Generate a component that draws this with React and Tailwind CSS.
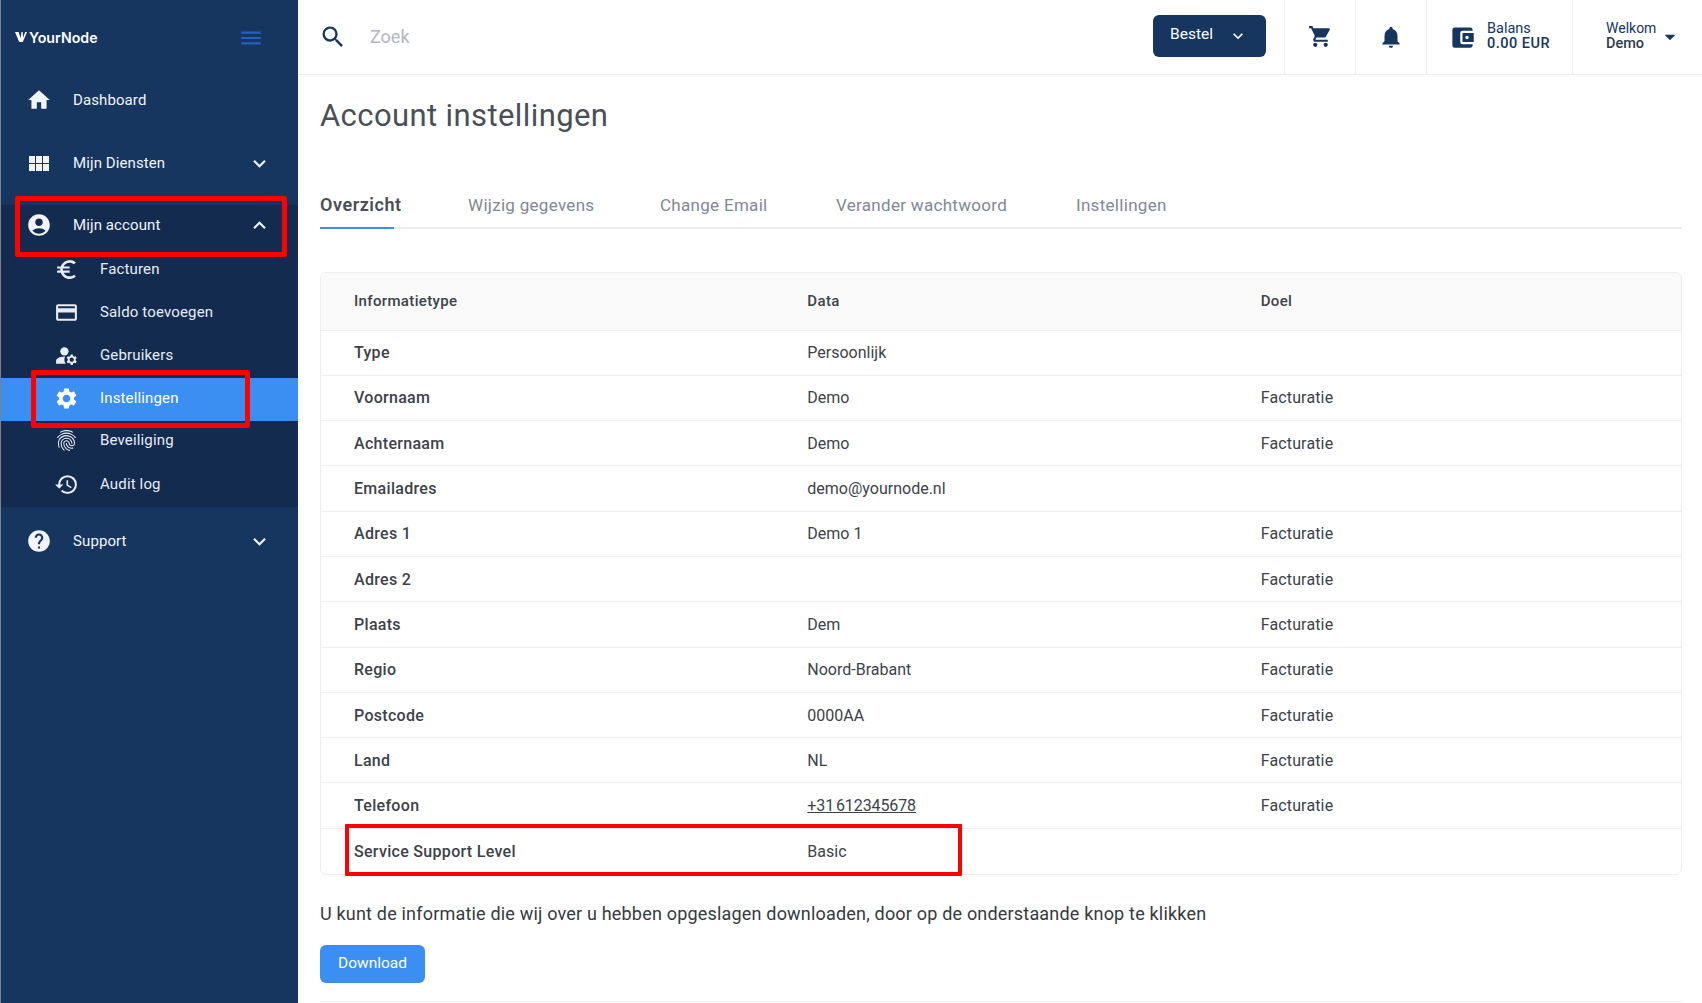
import React from "react";
import {
  MdHome, MdAccountCircle, MdEuroSymbol, MdCreditCard, MdManageAccounts, MdSettings,
  MdFingerprint, MdHistory, MdHelp, MdKeyboardArrowDown, MdKeyboardArrowUp, MdSearch, MdShoppingCart,
  MdNotifications, MdAccountBalanceWallet, MdArrowDropDown, MdMenu,
} from "react-icons/md";

const font = { fontFamily: "Roboto, 'Liberation Sans', sans-serif" };

function GridIcon({ className }) {
  return (
    <svg viewBox="0 0 26 26" className={className} fill="currentColor">
      <rect x="3" y="5" width="6" height="7" />
      <rect x="10" y="5" width="6" height="7" />
      <rect x="17" y="5" width="6" height="7" />
      <rect x="3" y="13" width="6" height="7" />
      <rect x="10" y="13" width="6" height="7" />
      <rect x="17" y="13" width="6" height="7" />
    </svg>
  );
}

function TopRow({ icon: Icon, label, chevron, className = "" }) {
  return (
    <div className={`flex items-center pl-[25px] pr-[26px] text-[#f1f4f8] ${className}`}>
      <Icon className="w-[26px] h-[26px] shrink-0" />
      <span className="ml-[21px] text-[15px] tracking-[0.1px] flex-1">{label}</span>
      {chevron === "down" && <MdKeyboardArrowDown className="w-[25px] h-[25px]" />}
      {chevron === "up" && <MdKeyboardArrowUp className="w-[25px] h-[25px]" />}
    </div>
  );
}

function SubRow({ icon: Icon, label, active, className = "" }) {
  return (
    <div className={`h-[43px] flex items-center pl-[53px] text-[15px] tracking-[0.15px] ${active ? "bg-[#3b8ff3] text-white" : "text-[#e8edf3]"} ${className}`}>
      <Icon className="w-[25px] h-[25px] shrink-0" />
      <span className="ml-[21px]">{label}</span>
    </div>
  );
}

const rows = [
  ["Type", "Persoonlijk", ""],
  ["Voornaam", "Demo", "Facturatie"],
  ["Achternaam", "Demo", "Facturatie"],
  ["Emailadres", "demo@yournode.nl", ""],
  ["Adres 1", "Demo 1", "Facturatie"],
  ["Adres 2", "", "Facturatie"],
  ["Plaats", "Dem", "Facturatie"],
  ["Regio", "Noord-Brabant", "Facturatie"],
  ["Postcode", "0000AA", "Facturatie"],
  ["Land", "NL", "Facturatie"],
  ["Telefoon", "+31 612345678", "Facturatie"],
  ["Service Support Level", "Basic", ""],
];

export default function App() {
  return (
    <div className="relative flex w-[1702px] h-[1003px] overflow-hidden bg-white" style={font}>
      {/* Sidebar */}
      <aside className="w-[298px] shrink-0 h-full bg-[#16355f] border-l border-[#7d8289] flex flex-col">
        <div className="h-[69px] flex items-center justify-between pl-[14px] pr-[34px] pt-[6px]">
          <div className="flex items-center">
            <svg viewBox="0 0 12 10" className="w-[12px] h-[10px] mr-[2px]" fill="#fff">
              <path d="M0 0h3.6l2.2 6.2L6.4 0h1.2l.6 5.6L10.2 0H12L7.8 10H4.2z" />
            </svg>
            <span className="text-[14.2px] font-semibold text-white" style={{ fontFamily: "Inter, sans-serif" }}>YourNode</span>
          </div>
          <MdMenu className="w-[26px] h-[26px] text-[#2362bd]" />
        </div>
        <TopRow icon={MdHome} label="Dashboard" className="h-[62px]" />
        <TopRow icon={GridIcon} label="Mijn Diensten" chevron="down" className="h-[63px] pt-[2px]" />
        <div className="mt-[11px] bg-[#132b4f]">
          <TopRow icon={MdAccountCircle} label="Mijn account" chevron="up" className="h-[43px] pb-[3px]" />
          <SubRow icon={MdEuroSymbol} label="Facturen" />
          <SubRow icon={MdCreditCard} label="Saldo toevoegen" />
          <SubRow icon={MdManageAccounts} label="Gebruikers" className="mb-[1px]" />
          <SubRow icon={MdSettings} label="Instellingen" active className="pb-[3px]" />
          <SubRow icon={MdFingerprint} label="Beveiliging" className="pb-[4px]" />
          <SubRow icon={MdHistory} label="Audit log" className="h-[41px] pb-[3px]" />
        </div>
        <TopRow icon={MdHelp} label="Support" chevron="down" className="h-[68px]" />
      </aside>

      {/* Main */}
      <div className="flex-1 min-w-0 flex flex-col">
        <header className="h-[75px] shrink-0 border-b border-[#eceef1] flex items-stretch">
          <div className="flex items-center pl-[21px] flex-1">
            <MdSearch className="w-[28px] h-[28px] text-[#16355f]" />
            <span className="ml-[23px] mb-[2px] text-[18px] text-[#b3b5c4]">Zoek</span>
          </div>
          <div className="flex items-center pr-[18px]">
            <button className="w-[113px] h-[42px] mb-[2px] pb-[2px] bg-[#16355f] rounded-[6px] text-white text-[15.5px] flex items-center pl-[17px]">
              Bestel
              <MdKeyboardArrowDown className="w-[20px] h-[20px] ml-[15px] mt-[2px]" />
            </button>
          </div>
          <div className="w-[71px] border-l border-[#eceef1] flex items-center justify-center">
            <MdShoppingCart className="w-[25px] h-[25px] text-[#16355f] mb-[2px]" />
          </div>
          <div className="w-[71px] border-l border-[#eceef1] flex items-center justify-center">
            <MdNotifications className="w-[26px] h-[26px] text-[#16355f]" />
          </div>
          <div className="w-[146px] border-l border-[#eceef1] flex items-center pl-[22px]">
            <MdAccountBalanceWallet className="w-[27px] h-[27px] text-[#16355f]" />
            <div className="ml-[11px] mb-[2px] text-[14.5px] leading-[15px] text-[#16355f]">
              <div>Balans</div>
              <div className="font-medium tracking-[0.5px]">0.00 EUR</div>
            </div>
          </div>
          <div className="w-[130px] border-l border-[#eceef1] flex items-center pl-[33px]">
            <div className="text-[14px] leading-[15px] text-[#16355f] mb-[2px]">
              <div>Welkom</div>
              <div className="font-medium text-[#2f3a4a] text-[14.5px]">Demo</div>
            </div>
            <MdArrowDropDown className="w-[26px] h-[26px] ml-[1px] text-[#16355f]" />
          </div>
        </header>

        <main className="pl-[22px] pr-[20px] flex-1 min-h-0">
          <h1 className="mt-[21px] text-[31px] leading-[40px] text-[#4a4f57] tracking-[0.4px]">Account instellingen</h1>

          <nav className="mt-[57px] h-[36px] border-b-2 border-[#eceef1] flex text-[17px] text-[#7f8894] tracking-[0.3px]">
            <div className="relative w-[148px] text-[18px] font-semibold leading-[24px] text-[#4a4f57] tracking-[0.55px]">
              Overzicht
              <div className="absolute left-0 top-[34px] w-[74px] h-[2px] bg-[#3b8ff3]" />
            </div>
            <div className="w-[192px]">Wijzig gegevens</div>
            <div className="w-[176px]">Change Email</div>
            <div className="w-[240px]">Verander wachtwoord</div>
            <div>Instellingen</div>
          </nav>

          <div className="mt-[43px] border border-[#eceef1] rounded-[6px] overflow-hidden">
            <table className="w-full table-fixed text-[16px] text-[#3d424a]">
              <thead>
                <tr className="h-[57px] bg-[#fafafa] text-left">
                  {["Informatietype", "Data", "Doel"].map((h) => (
                    <th key={h} className="pl-[33px] font-medium text-[15px] text-[#3d424a] tracking-[0.35px]">{h}</th>
                  ))}
                </tr>
              </thead>
              <tbody>
                {rows.map((r) => (
                  <tr key={r[0]} className="h-[45.3px] border-t border-[#eceef1]">
                    <td className="pl-[33px] pt-[1px] font-medium tracking-[0.3px]">{r[0]}</td>
                    <td className={`pl-[33px] pt-[1px] ${r[0] === "Telefoon" ? "underline tracking-[-0.1px] [word-spacing:-2px]" : ""}`}>{r[1]}</td>
                    <td className="pl-[33px] pt-[1px] tracking-[0.15px]">{r[2]}</td>
                  </tr>
                ))}
              </tbody>
            </table>
          </div>

          <p className="mt-[27px] text-[18px] leading-[24px] text-[#343a40] tracking-[0.19px]">
            U kunt de informatie die wij over u hebben opgeslagen downloaden, door op de onderstaande knop te klikken
          </p>
          <button className="mt-[19px] block w-[105px] h-[38px] rounded-[6px] bg-[#3b8ff3] text-white text-[15.5px]">Download</button>
          <div className="mt-[18px] border-t border-[#eceef1]" />
        </main>
      </div>

      {/* Annotation frames */}
      <div className="absolute left-[15px] top-[196px] w-[272px] h-[61px] border-[5px] border-[#ff0000] rounded-[2px]" />
      <div className="absolute left-[31px] top-[370px] w-[219px] h-[58px] border-[5px] border-[#ff0000] rounded-[2px]" />
      <div className="absolute left-[345px] top-[824px] w-[617px] h-[52px] border-[4px] border-[#ff0000] rounded-[1px]" />
    </div>
  );
}
